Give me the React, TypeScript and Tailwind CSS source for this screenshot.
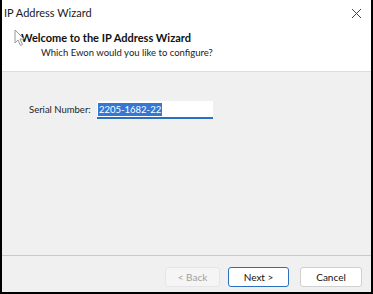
import React from "react";

const font = { fontFamily: 'Lato, "Liberation Sans", sans-serif' };

const App: React.FC = () => {
	return (
		<div className="w-[373px] h-[294px] bg-[#f0f0f0] border-x-2 border-b-2 border-black flex flex-col overflow-hidden" style={font}>
			{/* title bar + header */}
			<div className="bg-white h-[72px] border-b border-[#dcdcdc] relative">
				<div className="flex items-center justify-between h-[26px] pl-[2px] pr-[8px]">
					<span className="text-[11px] text-[#1a1a1a]">IP Address Wizard</span>
					<svg width="11" height="11" viewBox="0 0 11 11" className="mr-[1px]">
						<path d="M1 1 L10 10 M10 1 L1 10" stroke="#444" strokeWidth="1" fill="none" />
					</svg>
				</div>
				<div className="pl-[19px] pt-[5px] leading-[14px]">
					<div className="text-[11px] font-bold text-[#111]">Welcome to the IP Address Wizard</div>
					<div className="text-[9.5px] text-[#222] pl-[20px] pt-[1px]">Which Ewon would you like to configure?</div>
				</div>
				{/* mouse cursor */}
				<svg width="12" height="18" viewBox="0 0 12 18" className="absolute left-[12px] top-[29px]">
					<path d="M1 1 L1 14 L4 11 L6.5 16.5 L8.5 15.5 L6 10 L10 10 Z" fill="white" stroke="#999" strokeWidth="1" />
				</svg>
			</div>

			{/* body */}
			<div className="flex-1 flex flex-col">
				<div className="flex items-center pl-[27px] pt-[29px]">
					<span className="text-[9.5px] text-[#222] w-[68px] shrink-0 whitespace-nowrap">Serial Number:</span>
					<div className="w-[116px] h-[18px] bg-white border-b-2 border-[#2a6fc0] flex items-center pl-[1px]">
						<span className="bg-[#3478d4] text-white text-[9.5px] leading-[13px] px-[1px]">2205-1682-22</span>
					</div>
				</div>
			</div>

			{/* footer */}
			<div className="border-t border-[#c8c8c8] h-[37px] flex items-start justify-end pr-[9px] pt-[11px]">
				<button className="w-[55px] h-[20px] rounded-[3px] bg-[#f5f5f5] border border-[#e6e6e6] text-[10px] text-[#a0a0a0]">&lt; Back</button>
				<button className="ml-[8px] w-[61px] h-[20px] rounded-[3px] bg-white border border-[#2a6fc0] text-[10px] text-[#111]">Next &gt;</button>
				<button className="ml-[11px] w-[62px] h-[20px] rounded-[3px] bg-white border border-[#d0d0d0] text-[10px] text-[#111]">Cancel</button>
			</div>
		</div>
	);
};

export default App;
